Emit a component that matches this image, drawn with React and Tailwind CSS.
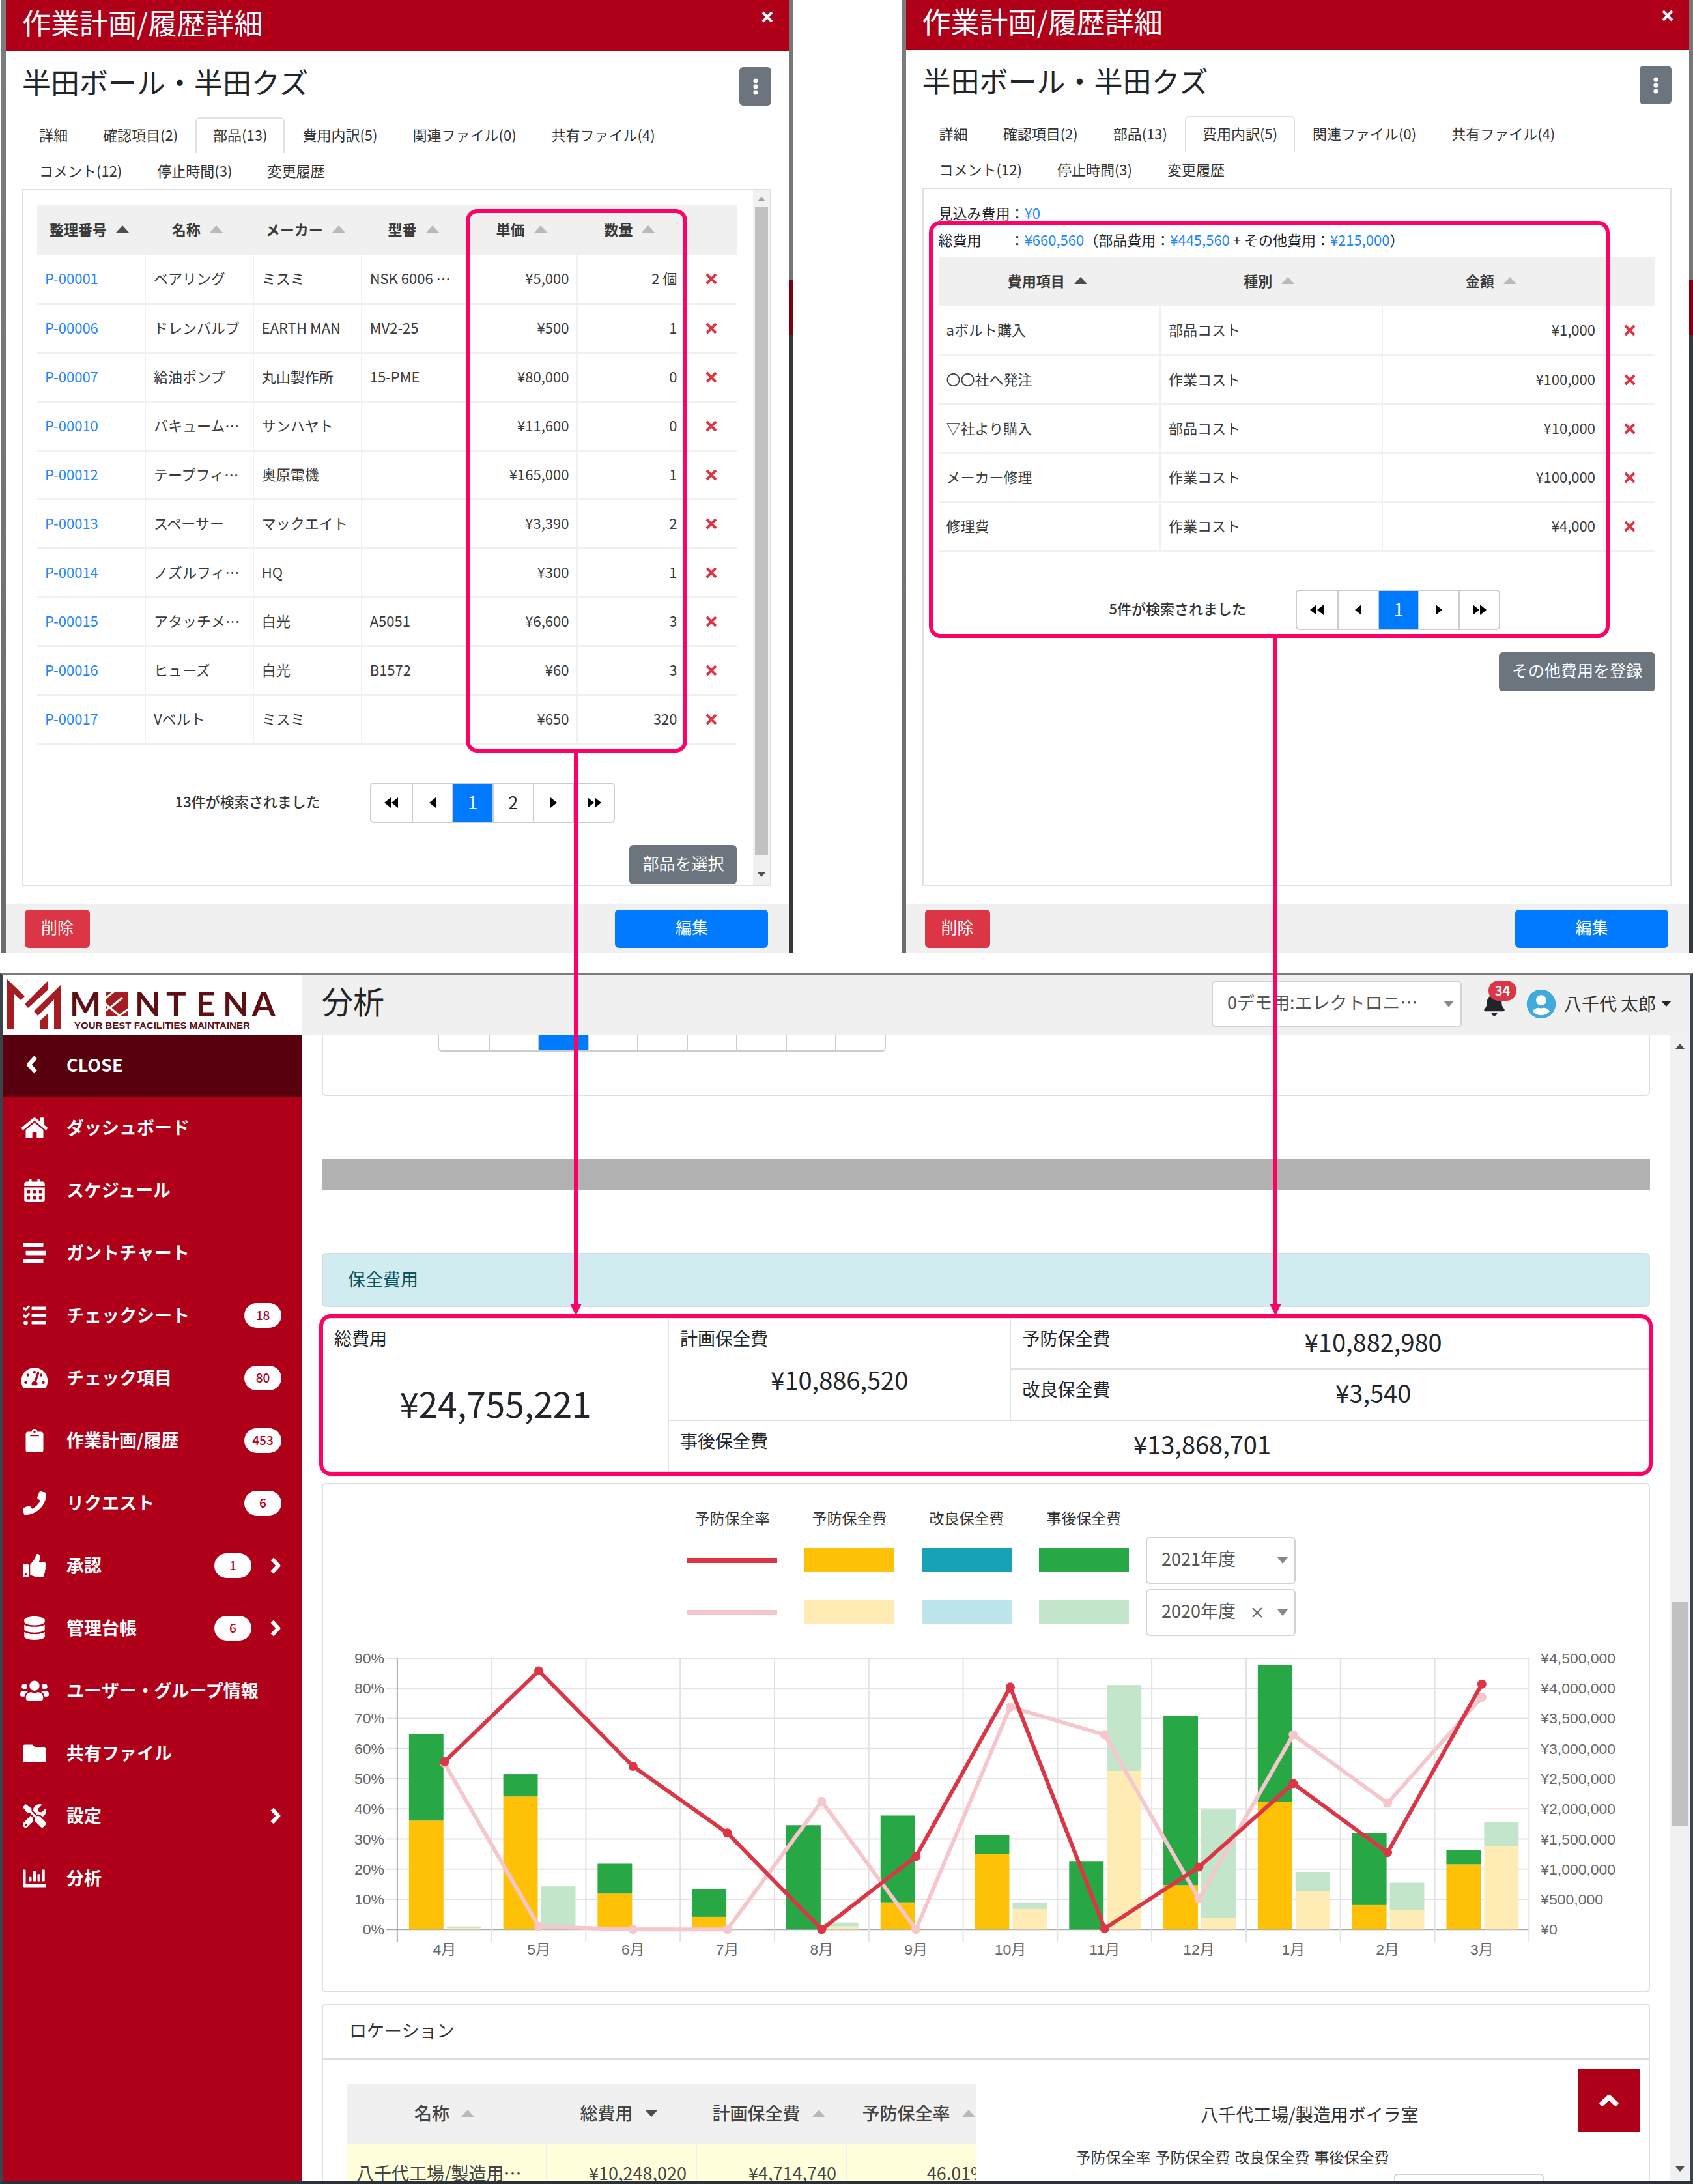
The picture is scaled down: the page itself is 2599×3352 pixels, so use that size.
import clsx from "clsx";
import {
    FaBell,
    FaCalendarAlt,
    FaChartBar,
    FaClipboard,
    FaDatabase,
    FaEllipsisV,
    FaFolder,
    FaHome,
    FaPhone,
    FaStream,
    FaTachometerAlt,
    FaTasks,
    FaThumbsUp,
    FaTools,
    FaUserCircle,
    FaUsers,
} from "react-icons/fa";

const TABS = ["詳細", "確認項目(2)", "部品(13)", "費用内訳(5)", "関連ファイル(0)", "共有ファイル(4)", "コメント(12)", "停止時間(3)", "変更履歴"];

const PARTS = [
    ["P-00001", "ベアリング", "ミスミ", "NSK 6006 …", "¥5,000", "2 個"],
    ["P-00006", "ドレンバルブ", "EARTH MAN", "MV2-25", "¥500", "1"],
    ["P-00007", "給油ポンプ", "丸山製作所", "15-PME", "¥80,000", "0"],
    ["P-00010", "バキューム…", "サンハヤト", "", "¥11,600", "0"],
    ["P-00012", "テープフィ…", "奥原電機", "", "¥165,000", "1"],
    ["P-00013", "スペーサー", "マックエイト", "", "¥3,390", "2"],
    ["P-00014", "ノズルフィ…", "HQ", "", "¥300", "1"],
    ["P-00015", "アタッチメ…", "白光", "A5051", "¥6,600", "3"],
    ["P-00016", "ヒューズ", "白光", "B1572", "¥60", "3"],
    ["P-00017", "Vベルト", "ミスミ", "", "¥650", "320"],
];

const COSTS = [
    ["aボルト購入", "部品コスト", "¥1,000"],
    ["〇〇社へ発注", "作業コスト", "¥100,000"],
    ["▽社より購入", "部品コスト", "¥10,000"],
    ["メーカー修理", "作業コスト", "¥100,000"],
    ["修理費", "作業コスト", "¥4,000"],
];

const MENU = [
    { icon: FaHome, label: "ダッシュボード" },
    { icon: FaCalendarAlt, label: "スケジュール" },
    { icon: FaStream, label: "ガントチャート" },
    { icon: FaTasks, label: "チェックシート", badge: 18 },
    { icon: FaTachometerAlt, label: "チェック項目", badge: 80 },
    { icon: FaClipboard, label: "作業計画/履歴", badge: 453 },
    { icon: FaPhone, label: "リクエスト", badge: 6 },
    { icon: FaThumbsUp, label: "承認", badge: 1, sub: true },
    { icon: FaDatabase, label: "管理台帳", badge: 6, sub: true },
    { icon: FaUsers, label: "ユーザー・グループ情報" },
    { icon: FaFolder, label: "共有ファイル" },
    { icon: FaTools, label: "設定", sub: true },
    { icon: FaChartBar, label: "分析" },
];

// percent axis values: a = preventive cost, b = top of the stacked bar, r = preventive rate
const MONTHS = [
    { m: "4月", a: 36.1, b: 64.9, pa: 0.5, pb: 1, r: 55.6, pr: 55.2 },
    { m: "5月", a: 44.1, b: 51.5, pa: 0, pb: 14.3, r: 85.8, pr: 1 },
    { m: "6月", a: 11.9, b: 21.8, pa: 0, pb: 0, r: 54.1, pr: 0 },
    { m: "7月", a: 4.2, b: 13.3, pa: 0, pb: 0.2, r: 32, pr: 0 },
    { m: "8月", a: 0, b: 34.6, pa: 1, pb: 2.3, r: 0, pr: 42.5 },
    { m: "9月", a: 9, b: 37.8, pa: 0, pb: 0, r: 24.2, pr: 0 },
    { m: "10月", a: 25.1, b: 31.3, pa: 6.8, pb: 9, r: 80.4, pr: 73.8 },
    { m: "11月", a: 0, b: 22.5, pa: 52.6, pb: 81.1, r: 0.3, pr: 64.6 },
    { m: "12月", a: 14.7, b: 70.9, pa: 3.9, pb: 39.8, r: 20.7, pr: 10.2 },
    { m: "1月", a: 42.4, b: 87.7, pa: 12.6, pb: 19.1, r: 48.4, pr: 64.6 },
    { m: "2月", a: 8.1, b: 31.9, pa: 6.5, pb: 15.5, r: 25.5, pr: 41.9 },
    { m: "3月", a: 21.6, b: 26.4, pa: 27.5, pb: 35.6, r: 81.4, pr: 77 },
];

const YEN = ["¥0", "¥500,000", "¥1,000,000", "¥1,500,000", "¥2,000,000", "¥2,500,000", "¥3,000,000", "¥3,500,000", "¥4,000,000", "¥4,500,000"];

const Cross = () => (
    <svg viewBox="0 0 18 18" className="h-[18px] w-[18px] fill-none stroke-current" strokeWidth="4">
        <path d="M2 2l14 14M16 2 2 16" />
    </svg>
);

const Chevron = ({ className }) => (
    <svg viewBox="0 0 20 30" className={clsx("fill-none stroke-current", className)} strokeWidth="7" strokeLinejoin="round">
        <path d="M4 3l11 12L4 27" />
    </svg>
);

const SortMark = ({ dir = "up", active = false }) => (
    <svg viewBox="0 0 20 11" className={clsx("h-[11px] w-5 shrink-0", active ? "fill-[#4d4d4d]" : "fill-[#b9b9b9]")}>
        <path d={dir === "up" ? "M0 11 10 0 20 11z" : "M0 0h20L10 11z"} />
    </svg>
);

const Caret = ({ className }) => (
    <svg viewBox="0 0 16 10" className={clsx("pointer-events-none absolute h-[10px] w-4", className)}>
        <path d="M0 0h16L8 10z" />
    </svg>
);

const PagerIcon = ({ kind }) => {
    const double = kind === "first" || kind === "last";
    const flip = kind === "next" || kind === "last";
    return (
        <svg viewBox="0 0 24 16" className="h-4 w-6 fill-black">
            <g transform={flip ? "matrix(-1 0 0 1 24 0)" : undefined}>
                {double ? <path d="M11 0v16L1 8zM22 0v16L12 8z" /> : <path d="M17 0v16L7 8z" />}
            </g>
        </svg>
    );
};

const Pager = ({ total, pages }) => (
    <div className="mt-[58px] flex items-center justify-center gap-[76px] pl-6">
        <span className="pb-1 text-[22px] font-medium text-[#333]">{total}件が検索されました</span>
        <div className="flex h-[62px] overflow-hidden rounded-md border-2 border-[#ccc] bg-white">
            {["first", "prev", ...pages, "next", "last"].map((p, i) => (
                <button
                    key={p}
                    aria-label={String(p)}
                    className={clsx(
                        "flex w-[62px] items-center justify-center text-[27px]",
                        i > 0 && "border-l-2 border-[#ccc]",
                        p === 1 ? "bg-[#007bff] text-white" : "text-[#222]"
                    )}
                >
                    {typeof p === "number" ? p : <PagerIcon kind={p} />}
                </button>
            ))}
        </div>
    </div>
);

const HeadCell = ({ children, active }) => (
    <th className="p-0 pb-1 font-bold">
        <span className="flex items-center justify-center gap-[14px] pr-[6px]">
            {children}
            <SortMark active={active} />
        </span>
    </th>
);

const DeleteCell = () => (
    <td className="p-0">
        <button aria-label="削除" className="flex w-full justify-center text-[#dc3545]">
            <Cross />
        </button>
    </td>
);

const CELL = "border-r-2 border-r-[#f1f1f1] px-3 pt-0 pb-[3px] whitespace-nowrap";
const ROW = "h-[75px] border-b-[3px] border-b-[#f0f0f0]";

const PartsTable = () => (
    <div className="relative">
        <table className="w-full table-fixed text-[22px] text-[#3a3a3a]">
            <thead>
                <tr className="h-[76px] bg-[#f0f0f0]">
                    <HeadCell active>整理番号</HeadCell>
                    <HeadCell>名称</HeadCell>
                    <HeadCell>メーカー</HeadCell>
                    <HeadCell>型番</HeadCell>
                    <HeadCell>単価</HeadCell>
                    <HeadCell>数量</HeadCell>
                    <th className="w-[79px]" />
                </tr>
            </thead>
            <tbody>
                {PARTS.map(([id, name, maker, model, price, qty]) => (
                    <tr key={id} className={ROW}>
                        <td className={CELL}>
                            <a href="#" className="text-[#1e87ff]">{id}</a>
                        </td>
                        <td className={CELL}>{name}</td>
                        <td className={CELL}>{maker}</td>
                        <td className={CELL}>{model}</td>
                        <td className={clsx(CELL, "text-right")}>{price}</td>
                        <td className={clsx(CELL, "text-right")}>{qty}</td>
                        <DeleteCell />
                    </tr>
                ))}
            </tbody>
        </table>
        <div className="pointer-events-none absolute top-[6px] -bottom-[12px] left-[61.2%] w-[31.7%] rounded-[18px] border-[6px] border-[#ff0066]" />
    </div>
);

const CostTable = () => (
    <table className="mt-[6px] w-full table-fixed text-[22px] text-[#3a3a3a]">
        <thead>
            <tr className="h-[76px] bg-[#f0f0f0]">
                <HeadCell active>費用項目</HeadCell>
                <HeadCell>種別</HeadCell>
                <HeadCell>金額</HeadCell>
                <th className="w-[79px]" />
            </tr>
        </thead>
        <tbody>
            {COSTS.map(([name, kind, price]) => (
                <tr key={name} className={ROW}>
                    <td className={CELL}>{name}</td>
                    <td className={CELL}>{kind}</td>
                    <td className={clsx(CELL, "text-right")}>{price}</td>
                    <DeleteCell />
                </tr>
            ))}
        </tbody>
    </table>
);

const Modal = ({ activeTab, tall, children, scrollbar }) => (
    <section className="flex w-[46.8%] bg-linear-to-b from-[#7d7d7d] to-[#6c6c6c]">
        <div className="w-[7px] shrink-0" />
        <div className="flex min-w-0 flex-1 flex-col bg-white">
            <header className={clsx("flex items-start justify-between bg-[#b00019] pr-6 pl-[25px] text-white", tall ? "h-[78px] pt-1" : "h-[76px] pt-[2px]")}>
                <h1 className="text-[44px] leading-[60px]">作業計画/履歴詳細</h1>
                <button aria-label="閉じる" className="mt-[13px]">
                    <Cross />
                </button>
            </header>
            <div className="flex items-start justify-between pt-[25px] pr-[27px] pl-[25px]">
                <h2 className="text-[44px] leading-[44px] text-[#212529]">半田ボール・半田クズ</h2>
                <button aria-label="メニュー" className="flex h-[59px] w-[49px] items-center justify-center rounded-md bg-[#6c757d] text-[26px] text-white">
                    <FaEllipsisV />
                </button>
            </div>
            <nav className="mt-[18px] flex flex-wrap pr-[120px] pl-[24px]">
                {TABS.map((t) => (
                    <button
                        key={t}
                        className={clsx(
                            "h-[55px] rounded-t-md border-2 border-b-0 px-[25px] pb-1 text-[22px] text-[#333]",
                            t === activeTab ? "border-[#dee2e6]" : "border-transparent"
                        )}
                    >
                        {t}
                    </button>
                ))}
            </nav>
            <div className="mr-[27px] mb-[27px] ml-[25px] flex flex-1 border-2 border-[#dee2e6]">
                <div className={clsx("min-w-0 flex-1", scrollbar ? "pr-[25px] pl-[21px]" : "px-[23px]")}>{children}</div>
                {scrollbar && (
                    <div className="flex w-[26px] shrink-0 flex-col items-center bg-[#f1f1f1]">
                        <span className="flex h-[26px] items-center">
                            <svg viewBox="0 0 12 7" className="h-[7px] w-3 fill-[#a3a3a3]"><path d="M0 7 6 0l6 7z" /></svg>
                        </span>
                        <span className="w-5 flex-1 bg-[#c1c1c1]" />
                        <span className="flex h-[46px] items-end pb-3">
                            <svg viewBox="0 0 12 7" className="h-[7px] w-3 fill-[#505050]"><path d="M0 0h12L6 7z" /></svg>
                        </span>
                    </div>
                )}
            </div>
            <footer className="flex items-center justify-between bg-[#f0f0f0] pt-[9px] pr-8 pb-[8px] pl-[29px] text-[25px] text-white">
                <button className="h-[59px] w-[100px] rounded-md bg-[#dc3545] pb-1">削除</button>
                <button className="h-[59px] w-[235px] rounded-md bg-[#007bff] pb-1">編集</button>
            </footer>
        </div>
        <div className="flex w-[6px] shrink-0 flex-col">
            <span className="h-[430px] bg-[#777]" />
            <span className="h-[84px] bg-[#7c0012]" />
            <span className="flex-1 bg-[#34373b]" />
        </div>
    </section>
);

const GrayButton = ({ children }) => (
    <div className="mt-[34px] flex justify-end">
        <button className="h-[60px] rounded-md bg-[#6c757d] px-5 pb-1 text-[25px] text-white">{children}</button>
    </div>
);

const Logo = () => (
    <svg viewBox="0 0 460 92" className="h-[92px] w-full bg-white" role="img" aria-label="MENTENA">
        <g fill="#a51c22">
            <path d="M7 7 34 33 28 39 17 29v54H7z" />
            <path d="M69 10v14L39 51l-5-6z" />
            <path d="M89 16v67H79V38L54 63l-6-7z" />
            <path d="M69 60v23H57V71z" />
            <path d="M159 26h34v37h-34z" />
        </g>
        {/* white cuts through the square emblem */}
        <path d="M157 37 173 24M158 45 182 65M166 50 184 35M157 56 165 49M180 62 194 52" stroke="#fff" strokeWidth="3" fill="none" />
        <text x="103 203 251 297 338 383" y="63" fill="#5d0f14" fontSize="51" fontWeight="700" className="font-[Lato]">MNTENA</text>
        <text x="110" y="83" fill="#5d0f14" fontSize="15" fontWeight="700" className="font-['Liberation_Sans']">YOUR BEST FACILITIES MAINTAINER</text>
    </svg>
);

const Sidebar = () => (
    <aside className="flex w-[460px] shrink-0 flex-col bg-[#b00019] font-bold text-white">
        <Logo />
        <button className="flex h-[95px] shrink-0 items-center bg-[#58000d] pb-[2px] text-[27px]">
            <span className="flex w-[98px] justify-center pr-2"><Chevron className="h-7 w-5 rotate-180" /></span>
            CLOSE
        </button>
        <nav>
            {MENU.map(({ icon: Icon, label, badge, sub }) => (
                <a key={label} href="#" className="flex h-24 items-center pr-[32px] text-[27px]">
                    <span className="flex w-[98px] shrink-0 justify-center"><Icon className="h-9 w-11" /></span>
                    <span className="flex-1 whitespace-nowrap">{label}</span>
                    {badge && (
                        <span className="flex h-[38px] w-[57px] items-center justify-center rounded-full bg-white text-[19px] font-medium text-[#b00019]">{badge}</span>
                    )}
                    {sub && <Chevron className="ml-7 h-[26px] w-[18px]" />}
                </a>
            ))}
        </nav>
    </aside>
);

const Select = ({ label, value, wide, clearable }) => (
    <div className={clsx("relative h-[72px] justify-self-end", wide ? "w-[384px]" : "w-[230px]")}>
        <select
            aria-label={label}
            className="h-full w-full appearance-none rounded-md border-2 border-[#ced4da] bg-white pb-1 pl-[22px] text-[27px] text-[#555]"
        >
            <option>{value}</option>
        </select>
        {clearable && (
            <button aria-label="クリア" className="absolute inset-y-0 right-[51px] flex items-center">
                <svg viewBox="0 0 16 16" className="h-4 w-4 stroke-[#666]" strokeWidth="2"><path d="M1 1l14 14M15 1 1 15" /></svg>
            </button>
        )}
        <Caret className="top-[31px] right-[12px] fill-[#888]" />
    </div>
);

const Swatch = ({ className }) => <span className={clsx("h-[37px] w-[138px] self-center justify-self-center", className)} />;
const LineSwatch = ({ className }) => <span className={clsx("h-2 w-[138px] self-center justify-self-center", className)} />;

const LEFT = 114;
const STEP = 145;
const BASE = 451;
const yOf = (v) => BASE - (v * 417) / 90;
const xOf = (i) => LEFT + STEP * i + STEP / 2;
const points = (key) => MONTHS.map((d, i) => `${xOf(i)},${yOf(d[key])}`).join(" ");

const Bar = ({ x, from, to, fill }) => (to > from ? <rect x={x} width="53" y={yOf(to)} height={yOf(from) - yOf(to)} fill={fill} /> : null);

const CostChart = () => (
    <svg viewBox="0 0 2038 546" className="block w-full font-['Liberation_Sans','Noto_Sans_CJK_JP',sans-serif]" fontSize="23" fill="#666">
        {YEN.map((yen, i) => (
            <g key={yen}>
                <line x1={LEFT - 17} x2={LEFT + STEP * 12} y1={yOf(i * 10)} y2={yOf(i * 10)} stroke={i ? "#e2e2e2" : "#aaa"} strokeWidth="2" />
                <text x="94" y={yOf(i * 10) + 8} textAnchor="end">{i * 10}%</text>
                <text x="1872" y={yOf(i * 10) + 8}>{yen}</text>
            </g>
        ))}
        {[...MONTHS, null].map((d, i) => (
            <line key={i} x1={LEFT + STEP * i} x2={LEFT + STEP * i} y1={yOf(90)} y2={BASE + 19} stroke={i ? "#e2e2e2" : "#aaa"} strokeWidth="2" />
        ))}
        {MONTHS.map((d, i) => {
            const x = LEFT + STEP * i;
            return (
                <g key={d.m}>
                    <Bar x={x + 18} from={0} to={d.a} fill="#ffc107" />
                    <Bar x={x + 18} from={d.a} to={d.b} fill="#28a745" />
                    <Bar x={x + 76} from={0} to={d.pa} fill="#ffecb5" />
                    <Bar x={x + 76} from={d.pa} to={d.pb} fill="#c3e6cb" />
                    <text x={xOf(i)} y={BASE + 39} textAnchor="middle">{d.m}</text>
                </g>
            );
        })}
        <polyline points={points("pr")} fill="none" stroke="#f5c6cb" strokeWidth="6" />
        {MONTHS.map((d, i) => <circle key={d.m} cx={xOf(i)} cy={yOf(d.pr)} r="7" fill="#f5c6cb" />)}
        <polyline points={points("r")} fill="none" stroke="#dc3545" strokeWidth="6" />
        {MONTHS.map((d, i) => <circle key={d.m} cx={xOf(i)} cy={yOf(d.r)} r="7" fill="#dc3545" />)}
    </svg>
);

const SmallCost = ({ label, value, className }) => (
    <div className={clsx("flex items-start border-t-2 border-[#dee2e6] px-[17px] pt-[10px]", className)}>
        <span className="w-[133px] shrink-0 text-[27px] leading-[40px] whitespace-nowrap">{label}</span>
        <span className="flex-1 text-center text-[38px] leading-[50px]">{value}</span>
    </div>
);

const CostSummary = () => (
    <div className="relative mt-4 flex h-[238px] border-x-2 border-b-2 border-[#dee2e6] text-[#212529]">
        <div className="w-[26%] border-t-2 border-[#dee2e6] px-[17px] pt-[10px]">
            <p className="text-[27px] leading-[40px]">総費用</p>
            <p className="mt-[40px] text-center text-[53px] leading-[78px]">¥24,755,221</p>
        </div>
        <div className="flex flex-1 flex-col border-l-2 border-[#dee2e6]">
            <div className="flex h-2/3">
                <div className="w-[34.8%] border-t-2 border-[#dee2e6] px-[17px] pt-[10px]">
                    <p className="text-[27px] leading-[40px]">計画保全費</p>
                    <p className="mt-[18px] text-center text-[38px] leading-[50px]">¥10,886,520</p>
                </div>
                <div className="flex flex-1 flex-col border-l-2 border-[#dee2e6]">
                    <SmallCost label="予防保全費" value="¥10,882,980" className="h-1/2" />
                    <SmallCost label="改良保全費" value="¥3,540" className="h-1/2" />
                </div>
            </div>
            <SmallCost label="事後保全費" value="¥13,868,701" className="h-1/3" />
        </div>
        <div className="pointer-events-none absolute -inset-x-[6px] -top-[5px] -bottom-[7px] rounded-[18px] border-[6px] border-[#ff0066]" />
    </div>
);

const CARD = "rounded-md border-2 border-[#dfdfdf] bg-white";

const LocationCard = () => (
    <div className={clsx(CARD, "mt-[17px]")}>
        <h3 className="h-[84px] border-b-2 border-[#dfdfdf] px-[40px] text-[27px] leading-[78px] text-[#333]">ロケーション</h3>
        <div className="flex items-start pt-[37px] pl-[37px]">
            <div className="w-[965px] shrink-0 overflow-hidden">
                <table className="w-[996px] table-fixed text-[27px] text-[#444]">
                    <thead>
                        <tr className="h-[93px] bg-[#f0f0f0]">
                            {["名称", "総費用", "計画保全費", "予防保全率"].map((h, i) => (
                                <th key={h} className={clsx("p-0 pb-[2px] font-medium whitespace-nowrap", i ? "w-[230px]" : "w-[306px]")}>
                                    <span className="flex items-center justify-center gap-[18px] pr-2">
                                        {h}
                                        <SortMark dir={i === 1 ? "down" : "up"} active={i === 1} />
                                    </span>
                                </th>
                            ))}
                        </tr>
                    </thead>
                    <tbody>
                        <tr className="h-[90px] bg-[#ffffdc]">
                            <td className="border-r-2 border-[#efefef] px-[14px] whitespace-nowrap">八千代工場/製造用…</td>
                            <td className="border-r-2 border-[#efefef] px-[14px] text-right">¥10,248,020</td>
                            <td className="border-r-2 border-[#efefef] px-[14px] text-right">¥4,714,740</td>
                            <td className="px-[14px] text-right">46.01%</td>
                        </tr>
                    </tbody>
                </table>
            </div>
            <div className="flex flex-1 flex-col items-center pt-[27px] pr-[8px] text-[#333]">
                <h4 className="text-[27px] leading-[40px]">八千代工場/製造用ボイラ室</h4>
                <div className="mt-[25px] grid grid-cols-[repeat(4,122px)_230px] gap-y-[6px] text-[23px] leading-[40px] whitespace-nowrap">
                    <span>予防保全率</span>
                    <span>予防保全費</span>
                    <span>改良保全費</span>
                    <span>事後保全費</span>
                    <span />
                    <div className="col-start-5"><Select label="年度" value="2021年度" /></div>
                </div>
            </div>
        </div>
    </div>
);

const Analysis = () => (
    <div className="relative min-w-0 flex-1 overflow-hidden px-[30px]">
        <div className="flex h-[94px] flex-col justify-end rounded-b-md border-x-2 border-b-2 border-[#dfdfdf] pb-[66px] pl-[176px]">
            <div className="flex h-[76px] shrink-0 self-start rounded-md border-2 border-[#ccc] text-[33px]">
                {["first", "prev", 1, 2, 3, 4, 5, "next", "last"].map((p, i) => (
                    <button
                        key={p}
                        aria-label={String(p)}
                        className={clsx(
                            "flex w-[76px] items-center justify-center",
                            i > 0 && "border-l-2 border-[#ccc]",
                            p === 1 && "bg-[#007bff] text-white"
                        )}
                    >
                        {typeof p === "number" ? p : <PagerIcon kind={p} />}
                    </button>
                ))}
            </div>
        </div>
        <div className="mt-[97px] h-[47px] bg-[#b1b1b1]" />
        <h3 className="mt-[97px] h-[83px] rounded-md border-2 border-[#d5dfe1] bg-[#d1ecf1] px-[38px] text-[27px] leading-[76px] text-[#0c5460]">保全費用</h3>
        <CostSummary />
        <div className={clsx(CARD, "mt-4")}>
            <div className="grid grid-cols-[repeat(4,180px)_235px] justify-center gap-y-2 pt-[32px] pr-1">
                {["予防保全率", "予防保全費", "改良保全費", "事後保全費"].map((t) => (
                    <span key={t} className="pb-[2px] text-center text-[23px] leading-[39px] text-[#333]">{t}</span>
                ))}
                <span />
                <LineSwatch className="bg-[#dc3545]" />
                <Swatch className="bg-[#ffc107]" />
                <Swatch className="bg-[#17a2b8]" />
                <Swatch className="bg-[#28a745]" />
                <Select label="年度" value="2021年度" />
                <LineSwatch className="bg-[#f5c6cb]" />
                <Swatch className="bg-[#ffecb5]" />
                <Swatch className="bg-[#bee5eb]" />
                <Swatch className="bg-[#c3e6cb]" />
                <Select label="比較年度" value="2020年度" clearable />
            </div>
            <CostChart />
        </div>
        <LocationCard />
        <button aria-label="上へ" className="absolute right-[45px] bottom-[75px] flex h-24 w-24 items-center justify-center bg-[#b00019] text-white">
            <Chevron className="h-8 w-6 -rotate-90" />
        </button>
    </div>
);

const Arrow = ({ className }) => (
    <div className={clsx("pointer-events-none absolute flex w-[18px] -translate-x-1/2 flex-col items-center", className)}>
        <span className="w-[6px] flex-1 bg-[#ff0066]" />
        <svg viewBox="0 0 18 18" className="h-[18px] w-[18px] fill-[#ff0066]"><path d="M0 0h18L9 18z" /></svg>
    </div>
);

export default function App() {
    return (
        <div lang="ja" className="relative flex h-screen flex-col overflow-hidden bg-white font-['Noto_Sans_CJK_JP',sans-serif] text-[#212529]">
            <div className="flex justify-between pl-[2px]">
                <Modal activeTab="部品(13)" tall scrollbar>
                    <div className="pt-[23px] pb-[1px]">
                        <PartsTable />
                        <Pager total={13} pages={[1, 2]} />
                        <GrayButton>部品を選択</GrayButton>
                    </div>
                </Modal>
                <Modal activeTab="費用内訳(5)">
                    <div className="relative pt-4">
                        <p className="text-[22px] leading-[41px]">
                            見込み費用：<a href="#" className="text-[#1e87ff]">¥0</a>
                        </p>
                        <p className="text-[22px] leading-[41px]">
                            総費用　　：<a href="#" className="text-[#1e87ff]">¥660,560</a>（部品費用：<a href="#" className="text-[#1e87ff]">¥445,560</a> + その他費用：<a href="#" className="text-[#1e87ff]">¥215,000</a>）
                        </p>
                        <CostTable />
                        <Pager total={5} pages={[1]} />
                        <div className="pointer-events-none absolute top-[49px] right-[70px] -bottom-[12px] -left-[15px] rounded-[18px] border-[6px] border-[#ff0066]" />
                    </div>
                    <GrayButton>その他費用を登録</GrayButton>
                </Modal>
            </div>

            <div className="mt-[31px] flex min-h-0 flex-1 border-x-4 border-t-2 border-b-[5px] border-x-[#3b444c] border-t-[#7b7b7b] border-b-[#2b323a]">
                <Sidebar />
                <div className="flex min-w-0 flex-1 flex-col">
                    <header className="flex h-[92px] shrink-0 items-center bg-[#f0f0f0] pr-[29px] pb-[2px] pl-[30px]">
                        <h1 className="flex-1 pb-3 text-[48px] leading-[70px]">分析</h1>
                        <Select label="拠点" value="0デモ用:エレクトロニ…" wide />
                        <button aria-label="通知" className="relative ml-[32px] text-[36px] text-[#212529]">
                            <FaBell />
                            <span className="absolute -top-[18px] left-[9px] flex h-[31px] w-[43px] items-center justify-center rounded-full bg-[#dc3545] text-[20px] font-bold text-white">34</span>
                        </button>
                        <button className="ml-[31px] flex items-center text-[27px] text-[#333]">
                            <FaUserCircle className="mr-[12px] rounded-full bg-white text-[46px] text-[#42a9dd]" />
                            八千代 太郎
                            <svg viewBox="0 0 16 9" className="ml-2 h-[9px] w-4 fill-[#212529]"><path d="M0 0h16L8 9z" /></svg>
                        </button>
                    </header>
                    <div className="flex min-h-0 flex-1">
                        <Analysis />
                        <div className="flex w-8 shrink-0 flex-col items-center bg-[#f1f1f1]">
                            <span className="flex h-9 items-center">
                                <svg viewBox="0 0 14 8" className="h-2 w-[14px] fill-[#505050]"><path d="M0 8 7 0l7 8z" /></svg>
                            </span>
                            <span className="flex-[834]" />
                            <span className="w-[25px] flex-[343] bg-[#c1c1c1]" />
                            <span className="flex-[509]" />
                            <span className="flex h-9 items-center">
                                <svg viewBox="0 0 14 8" className="h-2 w-[14px] fill-[#505050]"><path d="M0 0h14L7 8z" /></svg>
                            </span>
                        </div>
                    </div>
                </div>
            </div>

            <Arrow className="top-[1150px] left-[34%] h-[869px]" />
            <Arrow className="top-[974px] left-[75.35%] h-[1045px]" />
        </div>
    );
}
